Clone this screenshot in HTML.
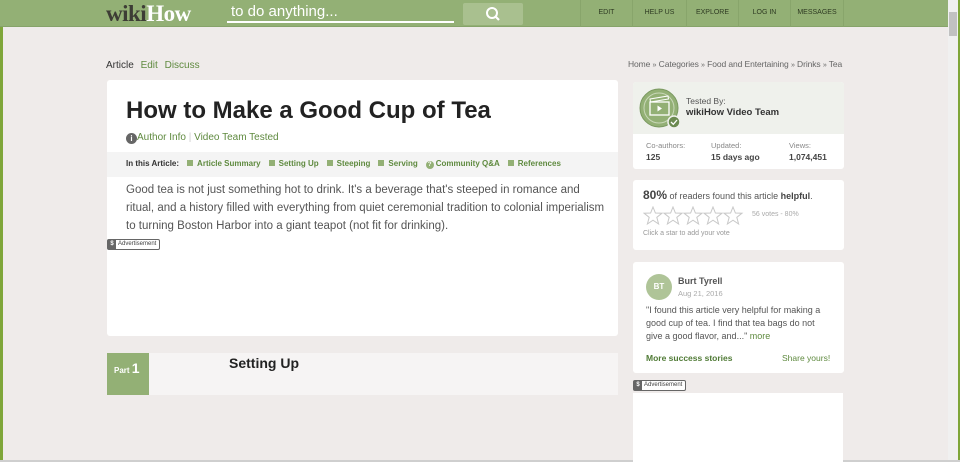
<!DOCTYPE html>
<html><head><meta charset="utf-8"><style>
*{margin:0;padding:0;box-sizing:border-box}
body{width:960px;height:462px;overflow:hidden;background:#efebea;font-family:"Liberation Sans",Arial,sans-serif;position:relative;color:#545454}
.abs{position:absolute}
#hdr{left:0;top:0;width:948px;height:27px;background:#93b075;border-bottom:1px solid #86a36a}
.nav{top:0;height:27px;font-size:7px;color:#2e3a22;line-height:26px;text-align:center;border-left:1px solid #88a56b}
.g{color:#5f8a3f}
.card{background:#fff;border-radius:3px}
.sq{display:inline-block;width:6px;height:6px;background:#93b075;margin:0 4px 0 8px;vertical-align:0}
.adv{font-size:6px;border:1px solid #666;background:#fff;border-radius:2px;height:11px;line-height:9px;padding-right:3px;color:#444}
.adv b{display:inline-block;background:#666;color:#fff;width:8px;text-align:center;margin-right:2px}
</style></head><body>
<div class="abs" style="left:0;top:0;width:3px;height:462px;background:#7fa63a"></div>
<div class="abs" style="left:958px;top:0;width:2px;height:462px;background:#7fa63a"></div>
<div class="abs" style="left:948px;top:0;width:10px;height:462px;background:#f0f0f0"></div>
<div class="abs" style="left:949px;top:12px;width:8px;height:24px;background:#c1c1c1"></div>
<div class="abs" style="left:0;top:460px;width:960px;height:2px;background:#cfcfcf"></div>
<div id="hdr" class="abs"></div>
<div class="abs" style="left:106px;top:0;font-family:'Liberation Serif',serif;font-weight:bold;font-size:23px;line-height:27px;letter-spacing:-0.5px"><span style="color:#3d3d35">wiki</span><span style="color:#fff">How</span></div>
<div class="abs" style="left:227px;top:2px;width:227px;height:21px;border-bottom:2px solid #fff;color:#fff;font-size:15px;line-height:20px;padding-left:4px">to do anything...</div>
<div class="abs" style="left:463px;top:3px;width:60px;height:22px;background:#a9c08f;border-radius:2px"><svg width="60" height="22"><circle cx="29" cy="10" r="5" stroke="#fff" stroke-width="2" fill="none"/><line x1="32.5" y1="13.5" x2="36" y2="17" stroke="#fff" stroke-width="2.2"/></svg></div>
<div class="abs nav" style="left:580px;width:52px">EDIT</div>
<div class="abs nav" style="left:632px;width:54px">HELP US</div>
<div class="abs nav" style="left:686px;width:52px">EXPLORE</div>
<div class="abs nav" style="left:738px;width:52px">LOG IN</div>
<div class="abs nav" style="left:790px;width:54px;border-right:1px solid #88a56b">MESSAGES</div>

<div class="abs" style="left:106px;top:60px;font-size:10px"><span style="color:#333">Article</span> <span class="g" style="margin-left:4px">Edit</span> <span class="g" style="margin-left:4px">Discuss</span></div>
<div class="abs" style="left:628px;top:59px;font-size:8.5px;color:#666;letter-spacing:-0.1px">Home <small>»</small> Categories <small>»</small> Food and Entertaining <small>»</small> Drinks <small>»</small> Tea</div>

<div class="abs card" style="left:107px;top:80px;width:511px;height:256px"></div>
<div class="abs" style="left:126px;top:97px;font-size:24px;font-weight:bold;color:#222">How to Make a Good Cup of Tea</div>
<div class="abs" style="left:126px;top:132px;font-size:10px" ><span style="display:inline-block;width:11px;height:11px;border-radius:50%;background:#666;color:#fff;font-size:8px;text-align:center;line-height:11px;font-weight:bold;vertical-align:-1px">i</span><span class="g">Author Info</span> <span style="color:#ccc">|</span> <span class="g">Video Team Tested</span></div>
<div class="abs" style="left:107px;top:152px;width:511px;height:25px;background:#f4f4f4;font-size:8px;font-weight:bold;line-height:23px;padding-left:19px;color:#333">In this Article:<span class="sq"></span><span class="g">Article Summary</span><span class="sq"></span><span class="g">Setting Up</span><span class="sq"></span><span class="g">Steeping</span><span class="sq"></span><span class="g">Serving</span><span style="display:inline-block;width:8px;height:8px;border-radius:50%;background:#93b075;color:#fff;font-size:6px;text-align:center;line-height:8px;margin:0 2px 0 8px">?</span><span class="g">Community Q&amp;A</span><span class="sq"></span><span class="g">References</span></div>
<div class="abs" style="left:126px;top:181px;width:480px;font-size:11.5px;line-height:18px;color:#555">Good tea is not just something hot to drink. It's a beverage that's steeped in romance and ritual, and a history filled with everything from quiet ceremonial tradition to colonial imperialism to turning Boston Harbor into a giant teapot (not fit for drinking).</div>
<div class="abs adv" style="left:107px;top:239px"><b>$</b>Advertisement</div>

<div class="abs" style="left:107px;top:353px;width:511px;height:42px;background:#f6f4f4"></div>
<div class="abs" style="left:107px;top:353px;width:42px;height:42px;background:#93b075;color:#fff;font-weight:bold;font-size:8px;padding:7px 0 0 7px">Part <span style="font-size:14px">1</span></div>
<div class="abs" style="left:229px;top:355px;font-size:14px;font-weight:bold;color:#222">Setting Up</div>

<div class="abs card" style="left:633px;top:82px;width:211px;height:87px"></div>
<div class="abs" style="left:633px;top:82px;width:211px;height:52px;background:#eff1ec;border-radius:3px 3px 0 0"></div>
<svg class="abs" style="left:639px;top:88px" width="42" height="42"><circle cx="20" cy="20" r="19" fill="#93b075" stroke="#7a9960" stroke-width="1"/><circle cx="20" cy="20" r="15" fill="#93b075" stroke="#c9d8b8" stroke-width="1"/><rect x="11" y="14" width="19" height="13" fill="none" stroke="#fff" stroke-width="1.3"/><path d="M11 11 L29 8 L29.5 11 L11.5 14Z" fill="none" stroke="#fff" stroke-width="1"/><path d="M18.5 17.5 L18.5 23.5 L23 20.5Z" fill="#fff"/><circle cx="35" cy="34" r="6" fill="#6b8a50" stroke="#eff1ec" stroke-width="1.5"/><path d="M32 34 L34.3 36.3 L38 32" stroke="#fff" stroke-width="1.3" fill="none"/></svg>
<div class="abs" style="left:686px;top:96px;font-size:8.5px;color:#555">Tested By:</div>
<div class="abs" style="left:686px;top:107px;font-size:9.5px;font-weight:bold;color:#333">wikiHow Video Team</div>
<div class="abs" style="left:646px;top:141px;font-size:7.5px;color:#888">Co-authors:</div>
<div class="abs" style="left:711px;top:141px;font-size:7.5px;color:#888">Updated:</div>
<div class="abs" style="left:789px;top:141px;font-size:7.5px;color:#888">Views:</div>
<div class="abs" style="left:646px;top:152px;font-size:8.5px;font-weight:bold;color:#444">125</div>
<div class="abs" style="left:711px;top:152px;font-size:8.5px;font-weight:bold;color:#444">15 days ago</div>
<div class="abs" style="left:789px;top:152px;font-size:8.5px;font-weight:bold;color:#444">1,074,451</div>

<div class="abs card" style="left:633px;top:180px;width:211px;height:70px"></div>
<div class="abs" style="left:643px;top:188px;font-size:9px;color:#555"><b style="font-size:12px;color:#444">80%</b> of readers found this article <b style="color:#444">helpful</b>.</div>
<svg class="abs" style="left:643px;top:206px" width="105" height="20"><g fill="none" stroke="#c8c8c8" stroke-width="1"><path id="s" d="M10 1 L12.4 7 L19 7.2 L13.8 11.3 L15.6 18 L10 14.2 L4.4 18 L6.2 11.3 L1 7.2 L7.6 7Z"/><use href="#s" x="20"/><use href="#s" x="40"/><use href="#s" x="60"/><use href="#s" x="80"/></g></svg>
<div class="abs" style="left:752px;top:211px;font-size:7px;color:#aaa">56 votes - 80%</div>
<div class="abs" style="left:643px;top:230px;font-size:7px;color:#999">Click a star to add your vote</div>

<div class="abs card" style="left:633px;top:262px;width:211px;height:111px"></div>
<div class="abs" style="left:646px;top:274px;width:26px;height:26px;border-radius:50%;background:#afc498;color:#fff;font-size:8px;font-weight:bold;text-align:center;line-height:26px">BT</div>
<div class="abs" style="left:678px;top:276px;font-size:9px;font-weight:bold;color:#555">Burt Tyrell</div>
<div class="abs" style="left:678px;top:289px;font-size:7.5px;color:#aaa">Aug 21, 2016</div>
<div class="abs" style="left:646px;top:304px;width:186px;font-size:9px;line-height:13px;color:#555">"I found this article very helpful for making a good cup of tea. I find that tea bags do not give a good flavor, and..." <span class="g">more</span></div>
<div class="abs g" style="left:646px;top:353px;font-size:8.5px;font-weight:bold;color:#4f7a35">More success stories</div>
<div class="abs g" style="left:782px;top:353px;font-size:8.5px">Share yours!</div>
<div class="abs adv" style="left:633px;top:380px"><b>$</b>Advertisement</div>
<div class="abs" style="left:633px;top:393px;width:210px;height:69px;background:#fff"></div>
</body></html>
